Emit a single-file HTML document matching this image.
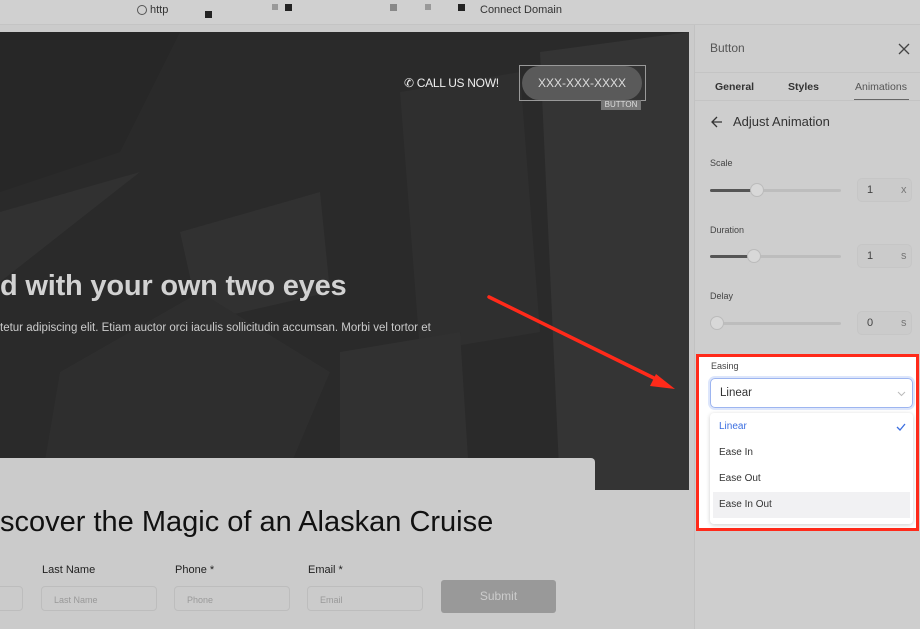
<!DOCTYPE html>
<html><head><meta charset="utf-8"><style>
*{margin:0;padding:0;box-sizing:border-box}
body{width:920px;height:629px;overflow:hidden;background:#cbcbcb;font-family:"Liberation Sans",sans-serif;position:relative}
.abs{position:absolute}
.topbar{left:0;top:0;width:920px;height:25px;background:#d0d0d0;border-bottom:1px solid #c4c4c4}
.hero{left:0;top:32px;width:689px;height:458px;background:#2b2b2b;overflow:hidden}
.panel{left:694px;top:25px;width:226px;height:604px;background:#cecece;border-left:1px solid #c2c2c2}
.lbl{font-size:9px;color:#444}
.track{height:3px;background:#bdbdbd;border-radius:2px}
.fill{height:3px;background:#555;border-radius:2px}
.knob{width:14px;height:14px;border-radius:50%;background:#d8d8d8;border:1px solid #bbb}
.num{width:55px;height:24px;border:1px solid #c6c6c6;border-radius:5px;background:#cbcbcb;font-size:11px;color:#444}
.fi{height:25px;border:1px solid #bdbdbd;border-radius:4px;font-size:9px;color:#999;padding:8px 0 0 12px}
.fl{font-size:11px;color:#222}
</style></head><body>
<div class="abs topbar">
 <div class="abs" style="left:137px;top:5px;width:10px;height:10px;border:1px solid #555;border-radius:50%"></div>
 <div class="abs" style="left:150px;top:4px;font-size:11px;color:#333">http</div>
 <div class="abs" style="left:205px;top:11px;width:7px;height:7px;background:#222"></div>
 <div class="abs" style="left:285px;top:4px;width:7px;height:7px;background:#222"></div>
 <div class="abs" style="left:272px;top:4px;width:6px;height:6px;background:#999"></div>
 <div class="abs" style="left:390px;top:4px;width:7px;height:7px;background:#888"></div>
 <div class="abs" style="left:458px;top:4px;width:7px;height:7px;background:#222"></div>
 <div class="abs" style="left:425px;top:4px;width:6px;height:6px;background:#999"></div>
 <div class="abs" style="left:480px;top:4px;font-size:11px;color:#333">Connect Domain</div>
</div>
<div class="abs hero">
 <svg width="689" height="458" style="position:absolute;left:0;top:0">
  <rect width="689" height="458" fill="#2a2a2a"/>
  <polygon points="0,0 180,0 120,120 0,160" fill="#272727"/>
  <polygon points="0,180 140,140 0,250" fill="#313131"/>
  <polygon points="540,20 689,0 689,458 560,458" fill="#343434"/>
  <polygon points="400,60 520,40 540,300 420,320" fill="#2f2f2f"/>
  <polygon points="180,200 320,160 330,260 200,290" fill="#313131"/>
  <polygon points="60,340 200,260 330,340 280,458 40,458" fill="#2e2e2e"/>
  <polygon points="340,320 460,300 470,458 340,458" fill="#313131"/>
 </svg>
 <div class="abs" style="left:404px;top:44px;font-size:12px;color:#eee;letter-spacing:-0.3px">&#9990; CALL US NOW!</div>
 <div class="abs" style="left:519px;top:33px;width:127px;height:36px;border:1px solid #999"></div>
 <div class="abs" style="left:522px;top:34px;width:120px;height:34px;border-radius:17px;background:#5a5a5a;color:#ddd;font-size:12px;text-align:center;line-height:34px">XXX-XXX-XXXX</div>
 <div class="abs" style="left:601px;top:68px;width:40px;height:10px;background:#777;color:#ddd;font-size:8px;text-align:center;line-height:10px">BUTTON</div>
 <div class="abs" style="left:0;top:238px;font-size:29px;font-weight:bold;color:#d2d2d2;white-space:nowrap;letter-spacing:-0.2px">d with your own two eyes</div>
 <div class="abs" style="left:0;top:290px;font-size:11.5px;color:#ccc;white-space:nowrap">tetur adipiscing elit. Etiam auctor orci iaculis sollicitudin accumsan. Morbi vel tortor et</div>
</div>
<div class="abs" style="left:0;top:458px;width:595px;height:171px;background:#cbcbcb;border-radius:0 4px 0 0"></div>
<div class="abs" style="left:0;top:506px;font-size:29px;color:#111;white-space:nowrap">scover the Magic of an Alaskan Cruise</div>
<div class="abs fl" style="left:42px;top:564px">Last Name</div>
<div class="abs fl" style="left:175px;top:564px">Phone *</div>
<div class="abs fl" style="left:308px;top:564px">Email *</div>
<div class="abs fi" style="left:-10px;top:586px;width:33px"></div>
<div class="abs fi" style="left:41px;top:586px;width:116px">Last Name</div>
<div class="abs fi" style="left:174px;top:586px;width:116px">Phone</div>
<div class="abs fi" style="left:307px;top:586px;width:116px">Email</div>
<div class="abs" style="left:441px;top:580px;width:115px;height:33px;background:#999;border-radius:3px;color:#ccc;font-size:12px;text-align:center;line-height:33px">Submit</div>
<div class="abs panel">
 <div class="abs" style="left:15px;top:16px;font-size:12px;color:#555">Button</div>
 <svg class="abs" style="left:203px;top:18px" width="12" height="12"><path d="M1 1L11 11M11 1L1 11" stroke="#444" stroke-width="1.3"/></svg>
 <div class="abs" style="left:0;top:47px;width:226px;border-top:1px solid #c4c4c4"></div>
 <div class="abs" style="left:20px;top:56px;font-size:10.5px;font-weight:bold;color:#333">General</div>
 <div class="abs" style="left:93px;top:56px;font-size:10.5px;font-weight:bold;color:#333">Styles</div>
 <div class="abs" style="left:160px;top:56px;font-size:10.5px;color:#555">Animations</div>
 <div class="abs" style="left:0;top:75px;width:226px;border-top:1px solid #c4c4c4"></div>
 <div class="abs" style="left:159px;top:74px;width:55px;border-top:1px solid #666"></div>
 <svg class="abs" style="left:16px;top:91px" width="12" height="12"><path d="M11 6H1M6 1L1 6L6 11" stroke="#333" stroke-width="1.3" fill="none"/></svg>
 <div class="abs" style="left:38px;top:89px;font-size:13px;color:#333">Adjust Animation</div>
 <div class="abs lbl" style="left:15px;top:133px">Scale</div>
 <div class="abs track" style="left:15px;top:164px;width:131px"></div><div class="abs fill" style="left:15px;top:164px;width:45px"></div><div class="abs knob" style="left:55px;top:158px"></div>
 <div class="abs num" style="left:162px;top:153px"><span class="abs" style="left:9px;top:5px">1</span><span class="abs" style="left:43px;top:5px;color:#777">x</span></div>
 <div class="abs lbl" style="left:15px;top:200px">Duration</div>
 <div class="abs track" style="left:15px;top:230px;width:131px"></div><div class="abs fill" style="left:15px;top:230px;width:42px"></div><div class="abs knob" style="left:52px;top:224px"></div>
 <div class="abs num" style="left:162px;top:219px"><span class="abs" style="left:9px;top:5px">1</span><span class="abs" style="left:43px;top:5px;color:#777">s</span></div>
 <div class="abs lbl" style="left:15px;top:266px">Delay</div>
 <div class="abs track" style="left:15px;top:297px;width:131px"></div><div class="abs knob" style="left:15px;top:291px"></div>
 <div class="abs num" style="left:162px;top:286px"><span class="abs" style="left:9px;top:5px">0</span><span class="abs" style="left:43px;top:5px;color:#777">s</span></div>
</div>
<div class="abs" style="left:696px;top:354px;width:223px;height:177px;border:3px solid #ff2a1a;background:#fff">
 <div class="abs lbl" style="left:12px;top:4px">Easing</div>
 <div class="abs" style="left:11px;top:21px;width:203px;height:30px;border:1px solid #9db5f0;border-radius:5px;box-shadow:0 0 0 2px #dde6fb;font-size:11.5px;color:#333;padding:8px 0 0 9px">Linear<svg class="abs" style="left:186px;top:12px" width="9" height="6"><path d="M1 1L4.5 4.5L8 1" stroke="#bbb" fill="none"/></svg></div>
 <div class="abs" style="left:11px;top:56px;width:203px;height:111px;background:#fff;box-shadow:0 1px 4px rgba(0,0,0,.2);border-radius:4px">
  <div class="abs" style="left:9px;top:8px;font-size:10px;color:#3b6ee0">Linear</div>
  <svg class="abs" style="left:186px;top:10px" width="10" height="8"><path d="M1 4L4 7L9 1" stroke="#3b6ee0" stroke-width="1.3" fill="none"/></svg>
  <div class="abs" style="left:9px;top:34px;font-size:10px;color:#333">Ease In</div>
  <div class="abs" style="left:9px;top:60px;font-size:10px;color:#333">Ease Out</div>
  <div class="abs" style="left:3px;top:79px;width:197px;height:26px;background:#f1f1f3"></div>
  <div class="abs" style="left:9px;top:86px;font-size:10px;color:#333">Ease In Out</div>
 </div>
</div>
<svg class="abs" style="left:0;top:0" width="920" height="629">
 <line x1="489" y1="297" x2="664" y2="383" stroke="#ff2a1a" stroke-width="3.5" stroke-linecap="round"/>
 <polygon points="675,389 656,374 650,386" fill="#ff2a1a"/>
</svg>
</body></html>
